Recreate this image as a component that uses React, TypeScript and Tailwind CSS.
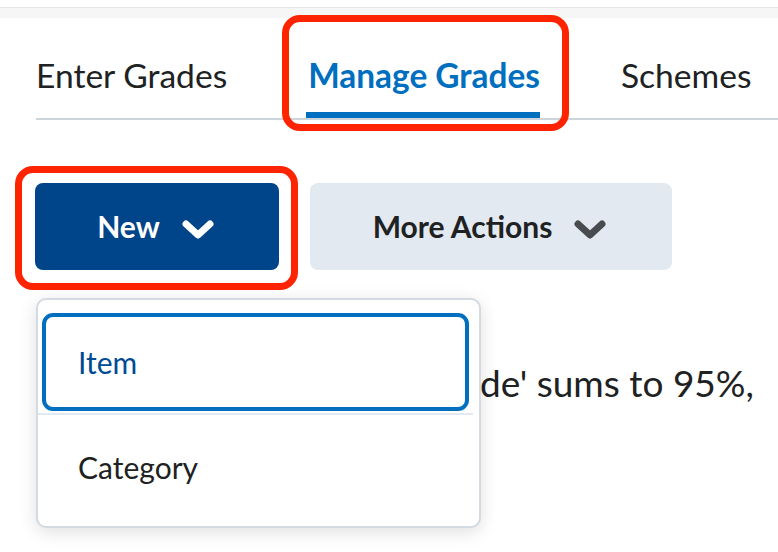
function Chevron({ className }: { className?: string }) {
  return (
    <svg viewBox="0 0 32 20" className={className} fill="none">
      <path d="M4 4 L16 15 L28 4" stroke="currentColor" strokeWidth="7" strokeLinecap="round" strokeLinejoin="round" />
    </svg>
  );
}

export default function App() {
  return (
    <div className="w-[778px] h-[552px] overflow-hidden bg-white text-[#202122]" style={{ fontFamily: "Lato, 'Noto Sans', sans-serif" }}>
      <div className="h-[7px] bg-white" />
      <div className="h-[11px] border-t border-[#e6e6e8] bg-[#f6f6f7]" />

      {/* tabs */}
      <div className="pl-[36px] pt-[34px]">
        <div className="flex gap-[81px] border-b-2 border-[#cdd5dc] h-[68px]">
          <div className="text-[33.6px] leading-[46px]">Enter Grades</div>
          <div className="relative flex flex-col">
            <div className="text-[33.4px] leading-[46px] font-bold text-[#006fbf]">Manage Grades</div>
            <div className="mt-auto -ml-[2px] h-[6px] bg-[#006fbf]" />
            <span className="absolute left-[-26px] right-[-29px] top-[-37px] bottom-[-13px] border-[7px] border-[#ff2400] rounded-[18px]" />
          </div>
          <div className="text-[33.6px] leading-[46px]">Schemes</div>
        </div>
      </div>

      {/* actions */}
      <div className="relative pl-[35px] pt-[63px]">
        <div className="flex gap-[31px]">
          <div className="relative">
            <button className="flex items-center justify-center gap-[22px] w-[244px] h-[87px] pr-[3px] rounded-[8px] bg-[#004489] text-white text-[30px] font-bold">
              New
              <Chevron className="w-[32px] h-[20px] mt-[6px]" />
            </button>
            <span className="absolute left-[-20px] right-[-19px] top-[-17px] bottom-[-20px] border-[7px] border-[#ff2400] rounded-[18px]" />
          </div>
          <button className="flex items-center justify-center gap-[22px] w-[362px] h-[87px] pr-[3px] rounded-[8px] bg-[#e3e9f1] text-[#202122] text-[30px] font-bold">
            More Actions
            <Chevron className="w-[32px] h-[20px] mt-[6px] text-[#494c4e]" />
          </button>
        </div>

        <p className="mt-[90px] pl-[70px] w-[740px] text-[37px] leading-[46px]">
          of 'Final Calculated Grade' sums to 95%, not 100%.
        </p>

        {/* dropdown menu */}
        <div className="absolute left-[36px] top-[178px] w-[445px] h-[230px] rounded-[10px] border-2 border-[#d3dae1] bg-white shadow-[0_4px_18px_rgba(0,0,0,0.13)]">
          <div className="pl-[4px] pr-[10px] pt-[13px]">
            <div className="h-[98px] rounded-[11px] border-4 border-[#006fbf] flex items-center pl-[32px] text-[30px] text-[#004c94]">
              Item
            </div>
          </div>
          <div className="mt-[2px] mr-[6px] border-t-2 border-[#e3e9f1]" />
          <div className="h-[104px] flex items-center pl-[40px] text-[30px]">Category</div>
        </div>
      </div>
    </div>
  );
}
